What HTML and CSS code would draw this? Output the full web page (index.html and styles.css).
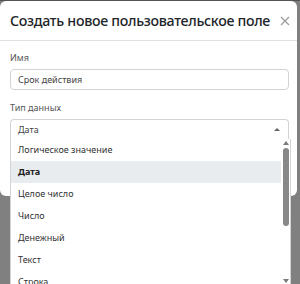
FILE: index.html
```html
<!DOCTYPE html>
<html lang="ru">
<head>
  <meta charset="UTF-8" />
  <meta name="viewport" content="width=device-width, initial-scale=1.0"/>
  <title>Создать новое пользовательское поле</title>
  <link rel="stylesheet" href="styles.css">
</head>
<body>
  <div class="backdrop-top"></div>
  <div class="modal">
    <div class="modal-header">
      <h2 class="modal-title">Создать новое пользовательское поле</h2>
      <svg class="close" width="10" height="10" viewBox="0 0 10 10">
        <path d="M1 1 L9 9 M9 1 L1 9" stroke="#9a9a9a" stroke-width="1.2" fill="none"/>
      </svg>
    </div>
    <div class="modal-body">
      <label class="field-label">Имя</label>
      <div class="input">Срок действия</div>

      <label class="field-label">Тип данных</label>
      <div class="select">
        <span>Дата</span>
        <span class="caret"></span>
      </div>
    </div>
  </div>

  <div class="dropdown">
    <ul class="options">
      <li>Логическое значение</li>
      <li class="selected">Дата</li>
      <li>Целое число</li>
      <li>Число</li>
      <li>Денежный</li>
      <li>Текст</li>
      <li>Строка</li>
    </ul>
    <div class="scrollbar">
      <span class="arrow up"></span>
      <span class="thumb"></span>
      <span class="arrow down"></span>
    </div>
  </div>
</body>
</html>
```

FILE: styles.css
```css
:root {
  --overlay: #808080;
  --borda: #d0d4d8;
  --texto: #333;
  --cinza: #555;
}

* {
  box-sizing: border-box;
}

body {
  margin: 0;
  width: 300px;
  height: 284px;
  overflow: hidden;
  background-color: var(--overlay);
  font-family: 'Noto Sans', 'Open Sans', sans-serif;
  color: var(--texto);
  position: relative;
}

.backdrop-top {
  height: 1px;
  background-color: #50564f;
}

.modal {
  width: 297px;
  height: 195px;
  background-color: white;
  border-radius: 6px;
}

.modal-header {
  height: 40px;
  display: flex;
  align-items: center;
  justify-content: space-between;
  padding: 0 7px 0 10px;
  border-bottom: 1px solid #dee2e6;
}

.modal-title {
  margin: 0;
  font-size: 14.2px;
  font-weight: 500;
  color: #212529;
  letter-spacing: -0.3px;
  white-space: nowrap;
}

.close {
  flex-shrink: 0;
  margin-top: 1px;
}

.modal-body {
  padding: 9px 8px 0 10px;
}

.field-label {
  display: block;
  font-size: 9px;
  color: var(--cinza);
  line-height: 16px;
  margin-bottom: 3px;
}

.input, .select {
  height: 21px;
  border: 1px solid var(--borda);
  border-radius: 4px;
  padding: 0 7px;
  font-size: 9px;
  color: #444;
  display: flex;
  align-items: center;
}

.input {
  margin-bottom: 10px;
}

.select {
  justify-content: space-between;
  border-bottom-color: #e4e6e8;
  border-radius: 4px 4px 0 0;
}

.caret {
  width: 0;
  height: 0;
  border-left: 3px solid transparent;
  border-right: 3px solid transparent;
  border-bottom: 3px solid #666;
  margin-right: 1px;
}

.dropdown {
  position: absolute;
  left: 10px;
  top: 139px;
  width: 281px;
  height: 145px;
  background-color: white;
  border-left: 1px solid var(--borda);
  border-right: 1px solid var(--borda);
  display: flex;
}

.options {
  list-style: none;
  margin: 0;
  padding: 0;
  flex: 1;
  overflow: hidden;
}

.options li {
  height: 22px;
  line-height: 22px;
  padding-left: 7px;
  font-size: 9px;
  color: var(--texto);
}

.options li.selected {
  background-color: #e9ecef;
  font-weight: bold;
  color: #222;
}

.scrollbar {
  width: 9px;
  display: flex;
  flex-direction: column;
  align-items: center;
  padding: 2px 0 1px;
}

.arrow {
  width: 0;
  height: 0;
  border-left: 3px solid transparent;
  border-right: 3px solid transparent;
}

.arrow.up {
  border-bottom: 4px solid #7a7a7a;
}

.arrow.down {
  border-top: 4px solid #7a7a7a;
  margin-top: auto;
}

.thumb {
  width: 6px;
  height: 78px;
  margin-top: 3px;
  background-color: #888;
  border-radius: 3px;
}
```
